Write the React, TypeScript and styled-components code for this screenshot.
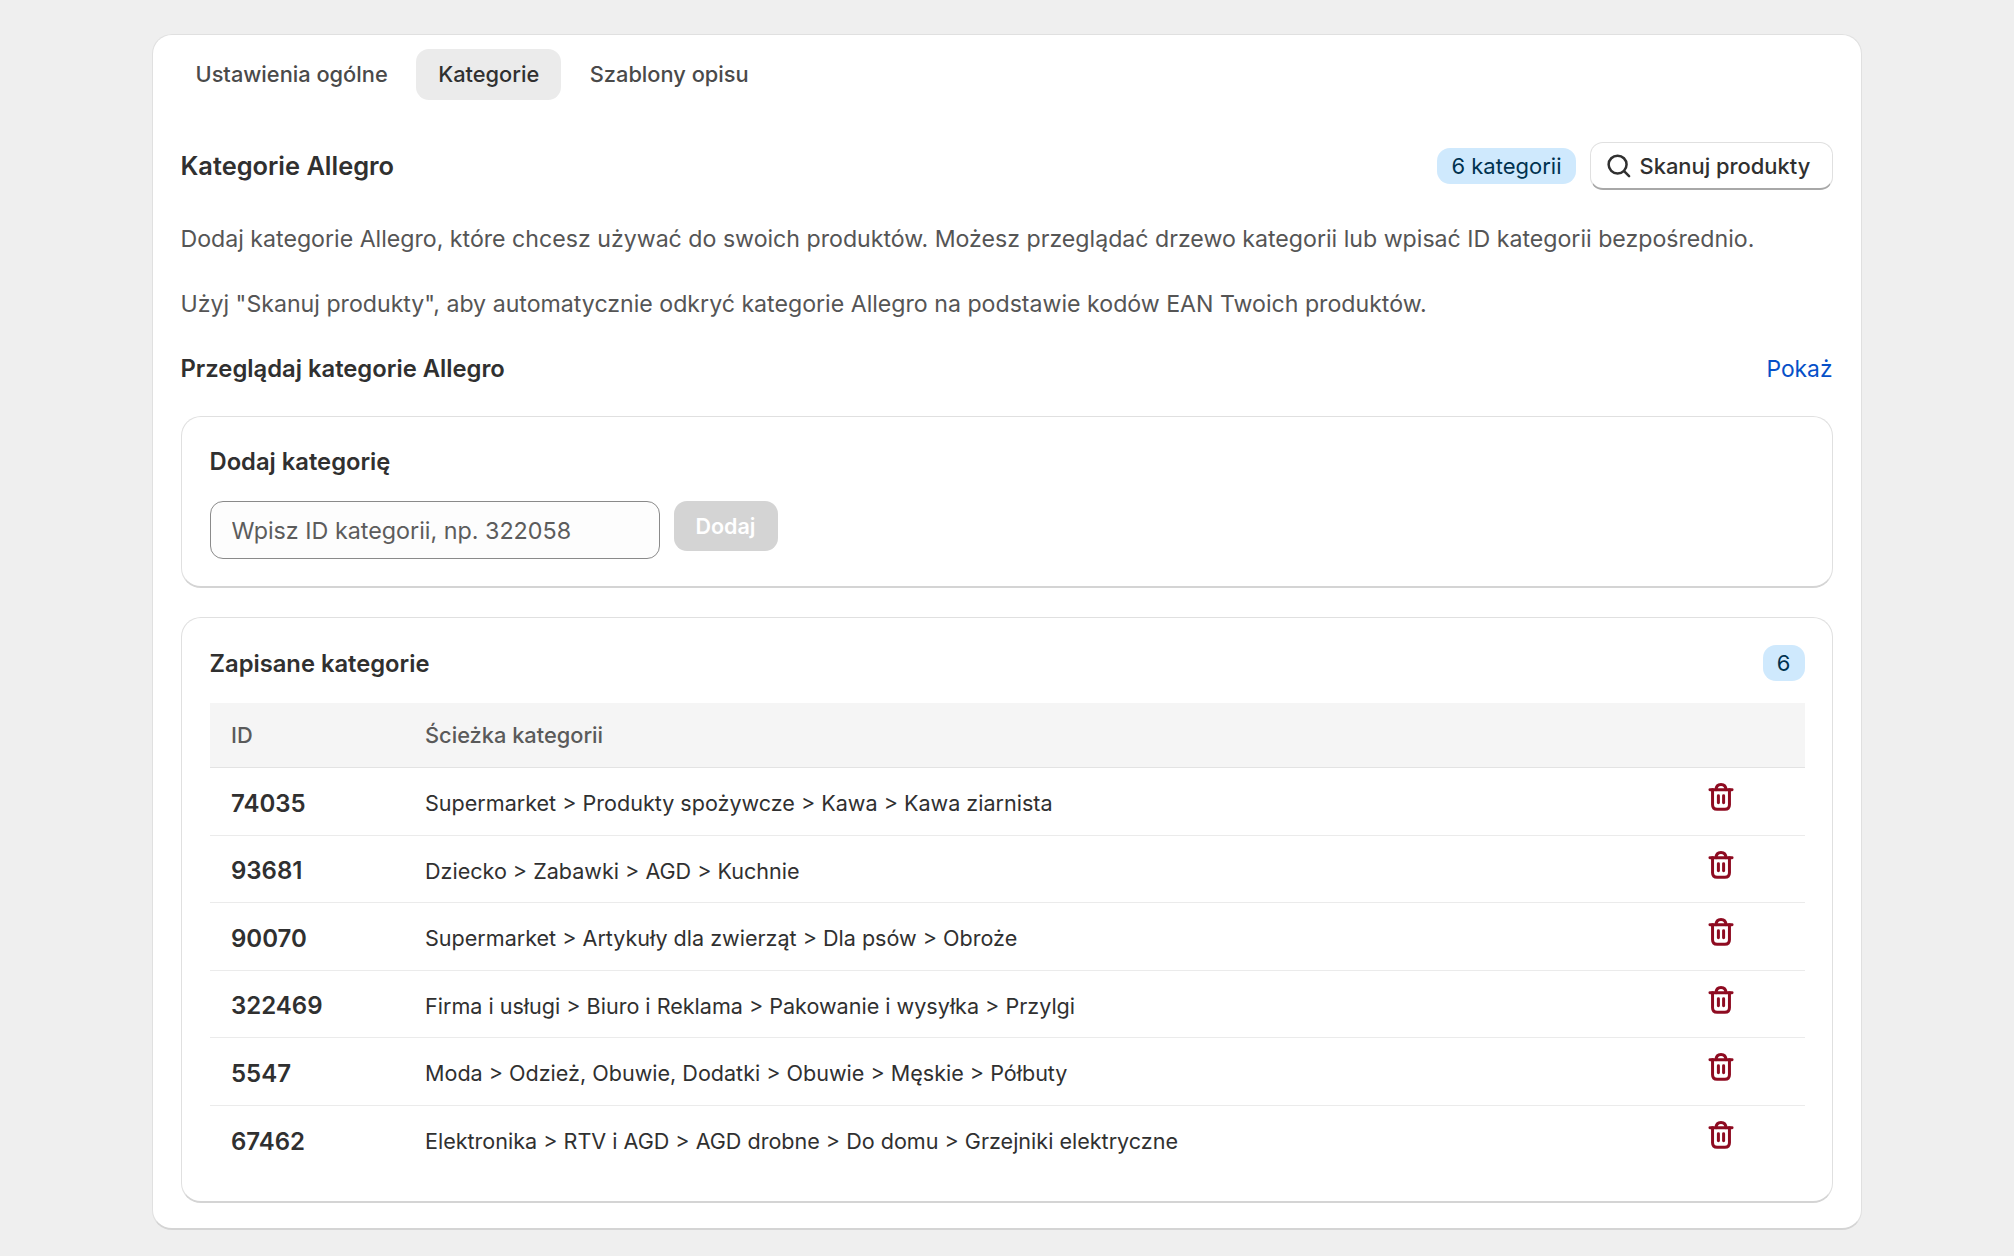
import React from "react";
import styled, { createGlobalStyle } from "styled-components";

const Global = createGlobalStyle`
  * { box-sizing: border-box; }
  html, body { margin: 0; padding: 0; background: #efefef; }
  body { font-family: Inter, "Noto Sans", sans-serif; color: #303030; -webkit-font-smoothing: antialiased; }
`;

const Page = styled.div`
  min-height: 1256px;
  padding: 34px 152px 27px 152px;
`;

const Card = styled.section`
  background: #fff;
  border-radius: 20px;
  border: 1.5px solid #e0e0e0;
  border-bottom: 2.5px solid #d4d4d4;
  padding: 14px 28.5px 25px 27.5px;
`;

const Tabs = styled.nav`
  display: flex;
  gap: 6.5px;
  margin-left: -7px;
`;

const Tab = styled.div<{ $active?: boolean }>`
  height: 51px;
  padding: 0 22px 1px;
  display: flex;
  align-items: center;
  border-radius: 13px;
  font-size: 21.8px;
  font-weight: 500;
  color: ${(p) => (p.$active ? "#303030" : "#4a4a4a")};
  background: ${(p) => (p.$active ? "#ebebeb" : "transparent")};
`;

const TitleRow = styled.div`
  margin-top: 42px;
  display: flex;
  align-items: center;
  justify-content: space-between;
`;

const Title = styled.h2`
  margin: 0 0 2px;
  font-size: 25.4px;
  font-weight: 600;
  color: #303030;
`;

const Actions = styled.div`
  display: flex;
  align-items: center;
  gap: 14px;
`;

const Badge = styled.span`
  height: 36px;
  padding: 0 14px;
  display: inline-flex;
  align-items: center;
  border-radius: 13px;
  background: #cfe9fd;
  color: #00324f;
  font-size: 22px;
  font-weight: 400;
`;

const OutlineButton = styled.button`
  height: 48px;
  width: 243px;
  padding: 0 13px 0 14px;
  display: flex;
  align-items: center;
  gap: 7px;
  background: #fff;
  border: 1.5px solid #e0e0e0;
  border-bottom: 2.5px solid #a8a8a8;
  border-radius: 13px;
  font-family: inherit;
  font-size: 21.9px;
  font-weight: 500;
  color: #303030;
`;

const Paragraph = styled.p<{ $gap: number }>`
  margin: ${(p) => p.$gap}px 0 0;
  font-size: 23.15px;
  line-height: 26px;
  color: #555;
`;

const SectionRow = styled.div`
  margin-top: 38px;
  display: flex;
  justify-content: space-between;
  align-items: center;
  height: 26px;
`;

const SectionTitle = styled.h3`
  margin: 0;
  font-size: 23.8px;
  font-weight: 600;
  color: #303030;
`;

const LinkText = styled.a`
  font-size: 22.8px;
  color: #0650c8;
`;

const Panel = styled.section<{ $mt: number; $pb: number }>`
  margin-top: ${(p) => p.$mt}px;
  border: 1.5px solid #e0e0e0;
  border-bottom: 2.5px solid #d4d4d4;
  border-radius: 20px;
  background: #fff;
  padding: 27px 27px ${(p) => p.$pb}px 28px;
`;

const PanelTitle = styled.h3`
  margin: 5px 0 0;
  font-size: 23.75px;
  line-height: 26px;
  font-weight: 600;
  color: #303030;
`;

const AddRow = styled.div`
  margin-top: 26px;
  display: flex;
  align-items: flex-start;
  gap: 14px;
`;

const IdInput = styled.input`
  width: 450px;
  height: 58px;
  padding: 0 21px;
  border: 1.3px solid #8a8a8a;
  border-radius: 13px;
  background: #fdfdfd;
  font-family: inherit;
  font-size: 23.3px;
  color: #303030;
  &::placeholder { color: #5c5c5c; opacity: 1; }
`;

const DisabledButton = styled.button`
  width: 104px;
  height: 50px;
  border: 0;
  border-radius: 13px;
  background: #d4d4d4;
  color: #fff;
  font-family: inherit;
  font-size: 21.5px;
  font-weight: 600;
`;

const SavedHeader = styled.div`
  display: flex;
  align-items: center;
  justify-content: space-between;
  height: 36px;
  margin-bottom: 22px;
`;

const SavedTitle = styled(PanelTitle)`
  margin: 2px 0 0;
`;

const HeadRow = styled.div`
  display: grid;
  grid-template-columns: 194px 1fr;
  height: 65px;
  align-items: center;
  padding-left: 21.5px;
  background: #f5f5f5;
  border-bottom: 1.5px solid #e3e3e3;
  font-size: 21.8px;
  font-weight: 500;
  color: #5a5a5a;
`;

const Row = styled.div`
  display: grid;
  grid-template-columns: 194px 1fr 97px;
  height: 67.5px;
  padding-left: 21.5px;
  align-items: center;
  border-bottom: 1.3px solid #ebebeb;
  &:last-child { border-bottom: 0; }
`;

const IdCell = styled.span`
  font-size: 24px;
  font-weight: 600;
  color: #303030;
  padding-top: 4px;
`;

const PathCell = styled.span`
  font-size: 21.55px;
  color: #303030;
  padding-top: 4px;
`;

const DeleteCell = styled.span`
  display: flex;
  padding-bottom: 8px;
`;

const SearchIcon = () => (
  <svg width="28" height="28" viewBox="0 0 20 20" fill="none" stroke="#303030" strokeWidth="1.8" strokeLinecap="round">
    <circle cx="9" cy="9" r="6.4" />
    <path d="M13.8 13.8 L17.2 17.2" />
  </svg>
);

const TrashIcon = () => (
  <svg width="26" height="30" viewBox="0 0 20 23" fill="none" stroke="#8e0b21" strokeWidth="2.3" strokeLinecap="round" strokeLinejoin="round">
    <path d="M1.5 6 H18.5" />
    <path d="M6.2 6 C6.2 3.2 7.7 1.8 10 1.8 C12.3 1.8 13.8 3.2 13.8 6" />
    <path d="M3.5 6 V17.5 C3.5 19.8 5 21 7 21 H13 C15 21 16.5 19.8 16.5 17.5 V6" />
    <path d="M8 10.5 V16" />
    <path d="M12 10.5 V16" />
  </svg>
);

const rows: [string, string][] = [
  ["74035", "Supermarket > Produkty spożywcze > Kawa > Kawa ziarnista"],
  ["93681", "Dziecko > Zabawki > AGD > Kuchnie"],
  ["90070", "Supermarket > Artykuły dla zwierząt > Dla psów > Obroże"],
  ["322469", "Firma i usługi > Biuro i Reklama > Pakowanie i wysyłka > Przylgi"],
  ["5547", "Moda > Odzież, Obuwie, Dodatki > Obuwie > Męskie > Półbuty"],
  ["67462", "Elektronika > RTV i AGD > AGD drobne > Do domu > Grzejniki elektryczne"],
];

export default function App() {
  return (
    <Page>
      <Global />
      <Card>
        <Tabs>
          <Tab>Ustawienia ogólne</Tab>
          <Tab $active>Kategorie</Tab>
          <Tab>Szablony opisu</Tab>
        </Tabs>
        <TitleRow>
          <Title>Kategorie Allegro</Title>
          <Actions>
            <Badge>6 kategorii</Badge>
            <OutlineButton>
              <SearchIcon />
              Skanuj produkty
            </OutlineButton>
          </Actions>
        </TitleRow>
        <Paragraph $gap={36}>
          Dodaj kategorie Allegro, które chcesz używać do swoich produktów. Możesz przeglądać drzewo kategorii lub wpisać ID kategorii bezpośrednio.
        </Paragraph>
        <Paragraph $gap={39}>
          Użyj "Skanuj produkty", aby automatycznie odkryć kategorie Allegro na podstawie kodów EAN Twoich produktów.
        </Paragraph>
        <SectionRow>
          <SectionTitle>Przeglądaj kategorie Allegro</SectionTitle>
          <LinkText>Pokaż</LinkText>
        </SectionRow>
        <Panel $mt={35} $pb={27}>
          <PanelTitle>Dodaj kategorię</PanelTitle>
          <AddRow>
            <IdInput placeholder="Wpisz ID kategorii, np. 322058" />
            <DisabledButton>Dodaj</DisabledButton>
          </AddRow>
        </Panel>
        <Panel $mt={29} $pb={28}>
          <SavedHeader>
            <SavedTitle>Zapisane kategorie</SavedTitle>
            <Badge>6</Badge>
          </SavedHeader>
          <HeadRow>
            <span>ID</span>
            <span>Ścieżka kategorii</span>
          </HeadRow>
          {rows.map(([id, path]) => (
            <Row key={id}>
              <IdCell>{id}</IdCell>
              <PathCell>{path}</PathCell>
              <DeleteCell><TrashIcon /></DeleteCell>
            </Row>
          ))}
        </Panel>
      </Card>
    </Page>
  );
}
